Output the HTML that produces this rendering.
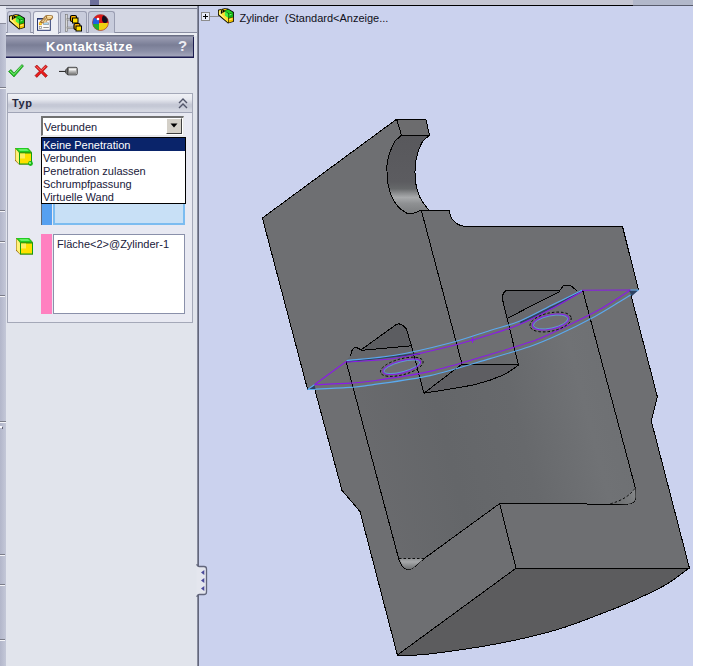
<!DOCTYPE html>
<html><head><meta charset="utf-8">
<style>
*{margin:0;padding:0;box-sizing:border-box}
html,body{width:701px;height:666px;overflow:hidden;background:#fff;font-family:"Liberation Sans",sans-serif;font-size:11px}
.a{position:absolute}
.t{position:absolute;white-space:nowrap;color:#20203a;font-size:11px;line-height:13px}
</style></head><body>
<!-- top strip -->
<div class="a" style="left:0;top:0;width:693px;height:5px;background:#c5c6d2"></div>
<div class="a" style="left:90px;top:0;width:9px;height:5px;background:#6c6e9a"></div>
<div class="a" style="left:633px;top:0;width:60px;height:5px;background:#b2b8ca"></div>
<div class="a" style="left:0;top:5px;width:693px;height:1px;background:#000"></div>
<div class="a" style="left:0;top:5px;width:90px;height:1px;background:#5c5e6c"></div>
<div class="a" style="left:633px;top:5px;width:60px;height:1px;background:#585c6c"></div>
<!-- left strip -->
<div class="a" style="left:0;top:6px;width:6px;height:660px;background:linear-gradient(90deg,#b2b6ca,#c4c8d8)"></div>
<div class="a" style="left:0;top:6px;width:6px;height:17px;background:#e4e6f0"></div>
<div class="a" style="left:0;top:23px;width:6px;height:1px;background:#8a8c9c"></div>
<div class="a" style="left:0;top:87px;width:6px;height:1px;background:#7a7c88"></div><div class="a" style="left:0;top:88px;width:6px;height:1px;background:#f4f4f8"></div>
<div class="a" style="left:0;top:210px;width:5px;height:1px;background:#7a7c88"></div><div class="a" style="left:0;top:211px;width:5px;height:1px;background:#f4f4f8"></div>
<div class="a" style="left:0;top:241px;width:5px;height:1px;background:#7a7c88"></div><div class="a" style="left:0;top:242px;width:5px;height:1px;background:#f4f4f8"></div>
<div class="a" style="left:0;top:295px;width:5px;height:1px;background:#7a7c88"></div><div class="a" style="left:0;top:296px;width:5px;height:1px;background:#f4f4f8"></div>
<div class="a" style="left:0;top:421px;width:6px;height:1px;background:#7a7c88"></div><div class="a" style="left:0;top:422px;width:6px;height:1px;background:#f4f4f8"></div>
<div class="a" style="left:0;top:554px;width:5px;height:1px;background:#7a7c88"></div><div class="a" style="left:0;top:555px;width:5px;height:1px;background:#f4f4f8"></div>
<div class="a" style="left:0;top:584px;width:5px;height:1px;background:#7a7c88"></div><div class="a" style="left:0;top:585px;width:5px;height:1px;background:#f4f4f8"></div>
<div class="a" style="left:0;top:639px;width:5px;height:1px;background:#7a7c88"></div><div class="a" style="left:0;top:640px;width:5px;height:1px;background:#f4f4f8"></div>
<div class="a" style="left:0;top:426px;width:2px;height:2px;background:#f8f8fc"></div><div class="a" style="left:2px;top:427px;width:1px;height:2px;background:#606070"></div>
<!-- panel -->
<div class="a" style="left:6px;top:6px;width:191px;height:660px;background:#e1e4ec"></div>
<div class="a" style="left:6px;top:6px;width:191px;height:27px;background:#d4d7e4"></div>
<div class="a" style="left:6px;top:8px;width:191px;height:1px;background:#7a7e92"></div>
<div class="a" style="left:6px;top:32px;width:191px;height:1px;background:#8a8ea2"></div>
<div class="a" style="left:6px;top:33px;width:191px;height:3px;background:#eceef4"></div>
<!-- tabs -->
<div class="a" style="left:7px;top:11px;width:24px;height:22px;background:#c8ccdc;border:1px solid #9a9eb2;border-bottom:none;border-radius:3px 3px 0 0"></div>
<div class="a" style="left:33px;top:11px;width:26px;height:23px;background:#eceef4;border:1px solid #9a9eb2;border-bottom:none;border-radius:3px 3px 0 0"></div>
<div class="a" style="left:60px;top:11px;width:27px;height:22px;background:#c8ccdc;border:1px solid #9a9eb2;border-bottom:none;border-radius:3px 3px 0 0"></div>
<div class="a" style="left:88px;top:11px;width:27px;height:22px;background:#c8ccdc;border:1px solid #9a9eb2;border-bottom:none;border-radius:3px 3px 0 0"></div>
<!-- header -->
<div class="a" style="left:6px;top:35px;width:188px;height:23px;background:linear-gradient(180deg,#6a6e84 0,#6a6e84 1px,#9c9eb4 2px,#7a7e96 10px,#8a8ea6 16px,#a2a4ba 21px,#1c1c50 22px,#1c1c50 23px)"></div>
<div class="t" style="left:46px;top:38px;font-size:13px;line-height:17px;color:#fff;font-weight:bold;letter-spacing:0.5px">Kontaktsätze</div>
<div class="a" style="left:193px;top:37px;width:1px;height:21px;background:#1c1c50"></div>
<div class="t" style="left:178px;top:37px;font-size:15px;line-height:17px;color:#ececf2;font-weight:bold">?</div>

<!-- tab icons -->
<svg class="a" style="left:8px;top:13px" width="20" height="19" viewBox="8 13 20 19">
 <path d="M9 15.8 L13.5 14.8 L15.5 14.2 L19 14.6 L24.9 18 L24.9 27.8 L19 29.6 L9 21.2 Z" fill="#000"/>
 <path d="M9.8 16.4 L13 15.6 L14.2 16.4 L13 19.3 L16 17.5 L19.2 20.5 L19 28.6 L9.8 20.6 Z" fill="#ffe030"/>
 <path d="M10.4 17.2 L11.6 17 L12.2 20 L17.5 26.3 L10.4 20.3 Z" fill="#fff8a0"/>
 <path d="M11.9 16.3 L13.7 16 L12.9 19.6 L11.8 19.9 Z" fill="#000"/>
 <path d="M13.8 15.2 L15.6 14.9 L18.5 15.3 L15.8 16.5 Z" fill="#f8c800"/>
 <path d="M15.8 16.8 L19.3 15.5 L24.1 18.6 L20.3 20 Z" fill="#22d022"/>
 <path d="M15.8 17 L19.3 19.8 L19.3 24 L15.8 21.6 Z" fill="#44ee44"/>
 <path d="M19.6 20 L24.1 18.8 L24.1 23 L19.6 24.3 Z" fill="#12b412"/>
 <path d="M20.5 21 L22.5 20.3" stroke="#a0ffa0" stroke-width="0.9"/>
 <path d="M19.6 24.6 L24.1 23.3 L24.1 27.3 L19.6 28.8 Z" fill="#f2c000"/>
 <path d="M20.2 25.3 L23.4 24.3 L23.4 25.3 L20.2 26.3 Z" fill="#ffec90"/>
</svg>
<svg class="a" style="left:36px;top:14px" width="20" height="18" viewBox="36 14 20 18">
 <rect x="37" y="18" width="13.8" height="12.8" fill="#2a3870"/>
 <rect x="38" y="19.2" width="11.8" height="10.6" fill="#fafafa"/>
 <rect x="38" y="19" width="11.8" height="1" fill="#8090b8"/>
 <rect x="38.9" y="22.3" width="2.8" height="2.8" fill="#e8a000"/>
 <rect x="39.6" y="23" width="1.4" height="1.4" fill="#ffe040"/>
 <rect x="43.3" y="22.5" width="5.5" height="2.4" fill="#8a8a8a"/>
 <rect x="43.8" y="23" width="4.5" height="1.4" fill="#a8d8f0"/>
 <rect x="38.9" y="26" width="2.8" height="2.8" fill="#8a8a8a"/>
 <rect x="39.6" y="26.7" width="1.4" height="1.4" fill="#fff"/>
 <rect x="43.3" y="27" width="5.5" height="0.9" fill="#8a8a8a"/>
 <path d="M39.5 22 L45.5 15.5 L47.5 15 L52.5 15.5 L53.2 17.5 L51.5 19.8 L48 20.5 L45.5 21 L43 23.5 Z" fill="#8a5a18"/>
 <path d="M40.5 21.5 L45.5 16.3 L47.8 21 L44 23 Z" fill="#e8c890"/>
 <path d="M41 21 L42 21 M43 19 L44 19 M42 20 L43 20 M44 18 L45 18 M44 20 L45 20 M43 22 L44 22 M45 19 L46 19 M46 21 L47 21" stroke="#7a4a10" stroke-width="0.7"/>
 <path d="M46.5 15.8 L52 16 L52.5 17.5 L50.5 19 L47.5 19.5 Z" fill="#f0d090"/>
 <path d="M47.5 16.3 L51 16.5" stroke="#fff0c0" stroke-width="0.8"/>
</svg>
<svg class="a" style="left:63px;top:14px" width="20" height="18" viewBox="0 0 20 18">
 <rect x="2.5" y="0.5" width="2" height="17" fill="#d8d8d8" stroke="#707070" stroke-width="0.6"/>
 <rect x="4" y="4.5" width="6" height="1.6" fill="#c8c8c8" stroke="#707070" stroke-width="0.5"/>
 <rect x="4" y="13" width="9" height="1.6" fill="#c8c8c8" stroke="#707070" stroke-width="0.5"/>
 <rect x="7.5" y="1.5" width="6" height="6" rx="1.5" fill="#ffb400" stroke="#000" stroke-width="1.2"/>
 <rect x="9.5" y="4" width="5.5" height="5" fill="#ffe000" stroke="#000" stroke-width="1"/>
 <rect x="11" y="9.5" width="6" height="6" rx="1.5" fill="#ffb400" stroke="#000" stroke-width="1.2"/>
 <rect x="13" y="12" width="5.5" height="5" fill="#ffe000" stroke="#000" stroke-width="1"/>
</svg>
<svg class="a" style="left:91px;top:13px" width="19" height="19" viewBox="0 0 19 19">
 <defs><clipPath id="cp"><circle cx="9.5" cy="9.5" r="8"/></clipPath></defs>
 <g clip-path="url(#cp)">
  <rect x="0" y="0" width="19" height="19" fill="#e01818"/>
  <rect x="0" y="10" width="19" height="9" fill="#f0d010"/>
  <path d="M0 3 L8 7 L8 12 L0 14 Z" fill="#2060e0"/>
  <path d="M0 11 L8 11 L8 19 L0 19 Z" fill="#20b030"/>
  <ellipse cx="14" cy="6" rx="3" ry="4" fill="#101020"/>
  <circle cx="7" cy="6" r="1.3" fill="#fff"/>
 </g>
 <circle cx="9.5" cy="9.5" r="8" fill="none" stroke="#a04040" stroke-width="0.6"/>
</svg>
<!-- check / x / pin -->
<svg class="a" style="left:7px;top:63px" width="18" height="16" viewBox="0 0 18 16">
 <path d="M1.5 8.5 L4 6.5 L7 10 L15 1.5 L16.5 3 L7 14 Z" fill="#22c022" stroke="#108010" stroke-width="0.6"/>
 <path d="M3 8 L7 11.5 L15 2.5" stroke="#9cf49c" stroke-width="0.8" fill="none"/>
</svg>
<svg class="a" style="left:34px;top:64px" width="15" height="15" viewBox="0 0 15 15">
 <path d="M1 2.8 L2.8 1 L7.2 5.4 L11.6 1 L13.4 2.8 L9 7.2 L13.4 11.6 L11.6 13.4 L7.2 9 L2.8 13.4 L1 11.6 L5.4 7.2 Z" fill="#e81c1c" stroke="#900000" stroke-width="0.6"/>
 <path d="M2.5 2.5 L7.2 7 M11.5 2.5 L7.5 6.5" stroke="#ff9090" stroke-width="0.6"/>
</svg>
<svg class="a" style="left:58px;top:65px" width="21" height="13" viewBox="58 65 21 13">
 <rect x="59" y="70.9" width="7" height="1.1" fill="#303030"/>
 <path d="M65.5 69.8 L68 67.6 L68 75 L65.5 73 Z" fill="#707070" stroke="#303030" stroke-width="0.6"/>
 <path d="M68 67.3 L76 67.3 Q77.3 67.3 77.3 68.6 L77.3 73.6 Q77.3 74.9 76 74.9 L68 74.9 Z" fill="#b8b8b8" stroke="#303030" stroke-width="0.8"/>
 <rect x="69" y="68.5" width="7" height="2" fill="#f2f2f2"/>
 <rect x="69" y="72.5" width="7" height="1.5" fill="#8a8a8a"/>
</svg>
<!-- group box -->
<div class="a" style="left:7px;top:93px;width:186px;height:230px;border:1px solid #a4a8b8;background:#e8e9f2"></div>
<div class="a" style="left:8px;top:94px;width:184px;height:19px;background:linear-gradient(180deg,#f0f1f6 0%,#e6e8ef 30%,#c6c9d6 58%,#c4c8d5 68%,#d2d5e0 88%,#d6d8e2 100%);border-bottom:1px solid #a0a4b6"></div>
<div class="t" style="left:12px;top:96px;font-weight:bold;color:#26283e;font-size:11px;line-height:14px;letter-spacing:0.6px">Typ</div>
<svg class="a" style="left:178px;top:98px" width="10" height="11" viewBox="0 0 10 11">
 <path d="M1 5 L5 1 L9 5 M1 10 L5 6 L9 10" stroke="#505468" stroke-width="1.4" fill="none"/>
</svg>
<!-- dropdown -->
<div class="a" style="left:41px;top:116px;width:143px;height:20px;background:#fff;border-top:2px solid #707070;border-left:2px solid #707070;border-right:1px solid #e8e8e8;border-bottom:1px solid #e8e8e8"></div>
<div class="a" style="left:166px;top:118px;width:16px;height:16px;background:#d4d0c8;border-top:1px solid #fff;border-left:1px solid #fff;border-right:1px solid #404040;border-bottom:1px solid #404040"></div>
<svg class="a" style="left:170px;top:123px" width="8" height="5" viewBox="0 0 8 5"><path d="M0.5 0.5 L7.5 0.5 L4 4.5 Z" fill="#000"/></svg>
<div class="t" style="left:44px;top:121px">Verbunden</div>
<!-- blue selection box -->
<div class="a" style="left:41px;top:203px;width:11px;height:22px;background:#56a0f0;border-left:1px solid #606878"></div>
<div class="a" style="left:53px;top:204px;width:132px;height:21px;background:#c8e0f6;border:2px solid #7cbcf0;border-top:none"></div>
<!-- list -->
<div class="a" style="left:41px;top:137px;width:145px;height:67px;background:#fff;border:1px solid #000"></div>
<div class="a" style="left:42px;top:138px;width:143px;height:13px;background:#0a246a"></div>
<div class="t" style="left:43px;top:139px;color:#fff">Keine Penetration</div>
<div class="t" style="left:43px;top:152px">Verbunden</div>
<div class="t" style="left:43px;top:165px">Penetration zulassen</div>
<div class="t" style="left:43px;top:178px">Schrumpfpassung</div>
<div class="t" style="left:43px;top:191px">Virtuelle Wand</div>
<!-- pink box -->
<div class="a" style="left:41px;top:234px;width:11px;height:80px;background:#ff80c0"></div>
<div class="a" style="left:53px;top:234px;width:132px;height:80px;background:#fff;border:1px solid #8a90aa"></div>
<div class="t" style="left:57px;top:238px">Fläche&lt;2&gt;@Zylinder-1</div>
<!-- cube icons -->
<svg class="a" style="left:14px;top:147px" width="21" height="21" viewBox="0 0 21 21">
 <path d="M1 1 L14 1 L18 5.5 L18 17.5 L5 17.5 L1 13.5 Z" fill="#906000"/>
 <path d="M1.5 1.5 L5 5.5 L5 17 L1.5 13 Z" fill="#fff27a"/>
 <path d="M1 1 L14 1 L18 5.5 L5 5.5 Z" fill="#22cc22"/>
 <path d="M4 2 L13 2 L15 4 L6 4 Z" fill="#66ee66"/>
 <rect x="5" y="5.5" width="13" height="12" fill="#10a010"/>
 <rect x="6" y="6.5" width="11" height="10" fill="#ffe000"/>
 <rect x="6" y="6.5" width="5" height="5" fill="#fff060"/>
 <circle cx="16.5" cy="16.5" r="2.4" fill="#18b818"/>
 <circle cx="16" cy="16" r="0.9" fill="#b0ffb0"/>
</svg>
<svg class="a" style="left:15px;top:237px" width="21" height="21" viewBox="0 0 21 21">
 <path d="M1 1 L14 1 L18 5.5 L18 17.5 L5 17.5 L1 13.5 Z" fill="#906000"/>
 <path d="M1.5 1.5 L5 5.5 L5 17 L1.5 13 Z" fill="#fff27a"/>
 <path d="M1 1 L14 1 L18 5.5 L5 5.5 Z" fill="#22cc22"/>
 <path d="M4 2 L13 2 L15 4 L6 4 Z" fill="#66ee66"/>
 <rect x="5" y="5.5" width="13" height="12" fill="#10a010"/>
 <rect x="6" y="6.5" width="11" height="10" fill="#ffe000"/>
 <rect x="6" y="6.5" width="5" height="5" fill="#fff060"/>
</svg>
<!-- divider handle -->
<!-- divider -->
<div class="a" style="left:197px;top:6px;width:2px;height:660px;background:linear-gradient(90deg,#9a9eb0,#50546a)"></div>
<!-- viewport -->
<div class="a" style="left:199px;top:6px;width:494px;height:660px;background:#cbd2ee"></div>
<!-- tree item -->
<div class="a" style="left:201px;top:12px;width:9px;height:9px;border:1px solid #8c8c8c;background:#e8ecf8"></div>
<div class="a" style="left:203px;top:16px;width:5px;height:1px;background:#000"></div>
<div class="a" style="left:205px;top:14px;width:1px;height:5px;background:#000"></div>
<div class="a" style="left:210px;top:16px;width:9px;height:1px;background:#909090"></div>
<svg class="a" style="left:218px;top:7px" width="20" height="19" viewBox="9 13 20 19">
 <path d="M9 15.8 L13.5 14.8 L15.5 14.2 L19 14.6 L24.9 18 L24.9 27.8 L19 29.6 L9 21.2 Z" fill="#000"/>
 <path d="M9.8 16.4 L13 15.6 L14.2 16.4 L13 19.3 L16 17.5 L19.2 20.5 L19 28.6 L9.8 20.6 Z" fill="#ffe030"/>
 <path d="M10.4 17.2 L11.6 17 L12.2 20 L17.5 26.3 L10.4 20.3 Z" fill="#fff8a0"/>
 <path d="M11.9 16.3 L13.7 16 L12.9 19.6 L11.8 19.9 Z" fill="#000"/>
 <path d="M13.8 15.2 L15.6 14.9 L18.5 15.3 L15.8 16.5 Z" fill="#f8c800"/>
 <path d="M15.8 16.8 L19.3 15.5 L24.1 18.6 L20.3 20 Z" fill="#22d022"/>
 <path d="M15.8 17 L19.3 19.8 L19.3 24 L15.8 21.6 Z" fill="#44ee44"/>
 <path d="M19.6 20 L24.1 18.8 L24.1 23 L19.6 24.3 Z" fill="#12b412"/>
 <path d="M20.5 21 L22.5 20.3" stroke="#a0ffa0" stroke-width="0.9"/>
 <path d="M19.6 24.6 L24.1 23.3 L24.1 27.3 L19.6 28.8 Z" fill="#f2c000"/>
 <path d="M20.2 25.3 L23.4 24.3 L23.4 25.3 L20.2 26.3 Z" fill="#ffec90"/>
</svg>
<div class="t" style="left:239.5px;top:12px;color:#101020">Zylinder&nbsp; (Standard&lt;Anzeige...</div>
<svg class="a" style="left:0;top:0" width="701" height="666" viewBox="0 0 701 666">
<defs>
<linearGradient id="cyl" x1="0" y1="135" x2="0" y2="213" gradientUnits="userSpaceOnUse"><stop offset="0" stop-color="#58585c"/><stop offset="0.6" stop-color="#5c5c60"/><stop offset="0.69" stop-color="#66686a"/><stop offset="0.745" stop-color="#8a8c8e"/><stop offset="0.8" stop-color="#a8aaac"/><stop offset="0.88" stop-color="#8e9092"/><stop offset="1" stop-color="#7c7e80"/></linearGradient>
<linearGradient id="pock" x1="350" y1="430" x2="640" y2="355" gradientUnits="userSpaceOnUse"><stop offset="0" stop-color="#6a6b6e"/><stop offset="0.3" stop-color="#646669"/><stop offset="0.55" stop-color="#67696c"/><stop offset="0.78" stop-color="#707275"/><stop offset="0.9" stop-color="#6e7073"/><stop offset="1" stop-color="#6a6c6f"/></linearGradient>
<linearGradient id="hl1" x1="0" y1="558" x2="0" y2="569" gradientUnits="userSpaceOnUse"><stop offset="0" stop-color="#8a8c8e"/><stop offset="0.35" stop-color="#a6a8aa"/><stop offset="1" stop-color="#707274"/></linearGradient>
<linearGradient id="hl2" x1="612" y1="504" x2="636" y2="490" gradientUnits="userSpaceOnUse"><stop offset="0" stop-color="#6a6c6e"/><stop offset="0.7" stop-color="#7a7c7e"/><stop offset="1" stop-color="#8a8c8e"/></linearGradient>
</defs>
<path d="M262.4 218.0 L396.6 119.2 L425.9 119.2 L429.5 135.3 C428.4 136.3 424.4 139.3 422.8 141.3 C421.2 143.3 420.7 145.2 419.8 147.3 C418.9 149.4 418.2 151.6 417.5 154.0 C416.8 156.4 416.1 158.7 415.7 161.5 C415.3 164.3 415.0 167.6 415.0 171.0 C415.0 174.4 414.9 178.0 415.5 182.0 C416.1 186.0 417.5 191.3 418.8 194.8 C420.1 198.3 421.6 200.4 423.3 203.0 C425.0 205.6 428.2 209.1 429.2 210.3 L449.5 210.5 A17 16 0 0 0 466.5 226.4 L622.5 226.4 L638.4 290.0 L630.8 294.4 L657.3 396.6 L651.3 421.0 L689.4 568.0 C685.2 570.9 674.4 579.8 664.2 585.6 C654.1 591.4 639.2 598.0 628.5 602.8 C617.8 607.6 611.4 609.9 600.0 614.2 C588.6 618.5 574.7 624.3 559.9 628.8 C545.1 633.3 527.6 637.5 511.4 641.0 C495.2 644.5 478.0 647.2 462.8 649.5 C447.6 651.8 431.2 653.9 420.3 654.8 C409.4 655.7 401.2 655.0 397.4 655.0 L360.0 511.5 L342.0 490.4 L314.8 389.5 L307.6 389.5 Z" fill="#6e6f72"/>
<path d="M346.0 361.0 L398.6 558.5 C401 566 404 569.2 407 569.2 L410.7 569.2 Q412 569 413 568 L424.2 558.5 L499.6 503.6 L626.7 504.2 Q635.6 504 635.6 497.1 L635.3 487.8 L582.7 290.3 L595.0 316.4 C588.8 319.5 568.6 330.0 557.8 335.0 C547.0 340.0 541.3 342.5 530.0 346.4 C518.7 350.3 506.7 353.7 490.0 358.6 C473.3 363.5 450.0 371.2 430.0 375.6 C410.0 380.0 383.3 383.1 370.0 385.1 C356.7 387.1 353.3 387.0 350.0 387.4 Z" fill="url(#pock)"/>
<path d="M516.0 568.2 L689.4 568.0 C685.2 570.9 674.4 579.8 664.2 585.6 C654.1 591.4 639.2 598.0 628.5 602.8 C617.8 607.6 611.4 609.9 600.0 614.2 C588.6 618.5 574.7 624.3 559.9 628.8 C545.1 633.3 527.6 637.5 511.4 641.0 C495.2 644.5 478.0 647.2 462.8 649.5 C447.6 651.8 431.2 653.9 420.3 654.8 C409.4 655.7 401.2 655.0 397.4 655.0 Z" fill="#5c5c5e"/>
<path d="M462.0 364.1 L518.5 365.0 C515.9 366.7 510.1 371.9 502.8 375.2 C495.6 378.4 488.1 381.5 475.0 384.5 C461.9 387.5 432.4 391.8 423.9 393.2 Z" fill="#5e5e62"/>
<path d="M401.5 135.3 L429.5 135.3 C428.4 136.3 424.4 139.3 422.8 141.3 C421.2 143.3 420.7 145.2 419.8 147.3 C418.9 149.4 418.2 151.6 417.5 154.0 C416.8 156.4 416.1 158.7 415.7 161.5 C415.3 164.3 415.0 167.6 415.0 171.0 C415.0 174.4 414.9 178.0 415.5 182.0 C416.1 186.0 417.5 191.3 418.8 194.8 C420.1 198.3 421.6 200.4 423.3 203.0 C425.0 205.6 428.2 209.1 429.2 210.3 L420.7 210.5 C419.6 210.9 416.8 212.3 415.0 212.8 C413.2 213.3 411.4 213.5 409.8 213.4 C408.2 213.3 407.4 213.8 405.3 212.4 C403.2 211.1 399.4 208.2 397.0 205.3 C394.6 202.4 392.6 198.9 391.0 194.8 C389.4 190.8 388.2 184.9 387.5 181.0 C386.8 177.1 387.1 174.2 387.0 171.3 C386.9 168.4 386.8 166.3 387.1 163.8 C387.4 161.3 387.9 158.8 388.6 156.3 C389.3 153.8 390.2 151.3 391.3 148.8 C392.4 146.3 393.3 143.6 395.0 141.3 C396.7 139.1 400.4 136.3 401.5 135.3 Z" fill="url(#cyl)"/>
<path d="M396.6 119.2 L425.9 119.2 L429.5 135.3 L401.5 135.3 Z" fill="#6c6c6e"/>
<path d="M350.3 356.0 L352.0 350.4 Q354 347 356.6 347.5 L361.1 349.8 L396.0 324.7 Q401 322 406.2 328.7 L410.2 341.3 L413.0 352.6 L346.3 360.1 Z" fill="#65666a"/>
<path d="M361.1 349.8 L396.0 324.7 Q401 322 406.2 328.7 L410.2 341.3 L411.3 345.8 Z" fill="#5c5d61"/>
<path d="M502.8 300.7 L502.8 295.0 Q504 290 509.3 290 L560.0 290.0 L563.5 285.7 L570.6 285.7 L577.0 290.5 L582.0 290.3 C577.3 292.6 564.3 298.9 554.0 304.0 C543.7 309.1 528.0 317.4 520.0 321.0 C512.0 324.6 508.3 324.8 506.0 325.5 Z" fill="#68696d"/>
<path d="M502.8 300.7 L502.8 295.0 Q504 290 509.3 290 L560.0 290.0 L560.0 291.4 C555.8 293.5 543.8 299.5 535.0 304.0 C526.2 308.5 511.8 316.1 507.1 318.5 Z" fill="#5e5f63"/>
<path d="M262.4 218.0 L396.6 119.2 L425.9 119.2 L429.5 135.3 C428.4 136.3 424.4 139.3 422.8 141.3 C421.2 143.3 420.7 145.2 419.8 147.3 C418.9 149.4 418.2 151.6 417.5 154.0 C416.8 156.4 416.1 158.7 415.7 161.5 C415.3 164.3 415.0 167.6 415.0 171.0 C415.0 174.4 414.9 178.0 415.5 182.0 C416.1 186.0 417.5 191.3 418.8 194.8 C420.1 198.3 421.6 200.4 423.3 203.0 C425.0 205.6 428.2 209.1 429.2 210.3 L449.5 210.5 A17 16 0 0 0 466.5 226.4 L622.5 226.4 L638.4 290.0" stroke="#000" stroke-width="1" fill="none" shape-rendering="crispEdges"/>
<path d="M630.8 294.4 L657.3 396.6 L651.3 421.0 L689.4 568.0 C685.2 570.9 674.4 579.8 664.2 585.6 C654.1 591.4 639.2 598.0 628.5 602.8 C617.8 607.6 611.4 609.9 600.0 614.2 C588.6 618.5 574.7 624.3 559.9 628.8 C545.1 633.3 527.6 637.5 511.4 641.0 C495.2 644.5 478.0 647.2 462.8 649.5 C447.6 651.8 431.2 653.9 420.3 654.8 C409.4 655.7 401.2 655.0 397.4 655.0 L360.0 511.5 L342.0 490.4 L314.8 389.5" stroke="#000" stroke-width="1" fill="none" shape-rendering="crispEdges"/>
<path d="M262.4 218.0 L307.6 389.5" stroke="#000" stroke-width="1" fill="none" shape-rendering="crispEdges"/>
<path d="M396.6 119.2 L401.5 135.3 L429.5 135.3" stroke="#000" stroke-width="1" fill="none" shape-rendering="crispEdges"/>
<path d="M401.5 135.3 C400.4 136.3 396.7 139.1 395.0 141.3 C393.3 143.6 392.4 146.3 391.3 148.8 C390.2 151.3 389.3 153.8 388.6 156.3 C387.9 158.8 387.4 161.3 387.1 163.8 C386.8 166.3 386.9 168.4 387.0 171.3 C387.1 174.2 386.8 177.1 387.5 181.0 C388.2 184.9 389.4 190.8 391.0 194.8 C392.6 198.9 394.6 202.4 397.0 205.3 C399.4 208.2 403.2 211.1 405.3 212.4 C407.4 213.8 408.2 213.3 409.8 213.4 C411.4 213.5 413.2 213.3 415.0 212.8 C416.8 212.3 419.6 210.9 420.5 210.5 L429.5 210.5" stroke="#000" stroke-width="1" fill="none" shape-rendering="crispEdges"/>
<path d="M421.5 211.0 L462.0 364.1 L518.5 365.0" stroke="#000" stroke-width="1" fill="none" shape-rendering="crispEdges"/>
<path d="M462.0 364.1 L423.9 393.2 C432.4 391.8 461.9 387.5 475.0 384.5 C488.1 381.5 495.6 378.4 502.8 375.2 C510.1 371.9 515.9 366.7 518.5 365.0" stroke="#000" stroke-width="1" fill="none" shape-rendering="crispEdges"/>
<path d="M502.8 300.7 L502.8 295.0 Q504 290 509.3 290 L560.0 290.0 L563.5 285.7 L570.6 285.7 L577.0 290.5" stroke="#000" stroke-width="1" fill="none" shape-rendering="crispEdges"/>
<path d="M502.8 300.7 L518.5 365.0" stroke="#000" stroke-width="1" fill="none" shape-rendering="crispEdges"/>
<path d="M507.1 318.5 C511.8 316.1 526.2 308.5 535.0 304.0 C543.8 299.5 555.8 293.5 560.0 291.4" stroke="#000" stroke-width="1" fill="none" shape-rendering="crispEdges"/>
<path d="M350.3 356.0 L352.0 350.4 Q354 347 356.6 347.5 L361.1 349.8 L396.0 324.7 Q401 322 406.2 328.7 L410.2 341.3 L423.9 393.2" stroke="#000" stroke-width="1" fill="none" shape-rendering="crispEdges"/>
<path d="M361.1 350.4 L411.3 345.8" stroke="#000" stroke-width="1" fill="none" shape-rendering="crispEdges"/>
<path d="M346.0 361.0 L398.6 558.5 C401 566 404 569.2 407 569.2 L410.7 569.2 Q412 569 413 568 L424.2 558.5 L499.6 503.6 L626.7 504.2 Q635.6 504 635.6 497.1 L635.3 487.8 L582.7 290.3" stroke="#000" stroke-width="1" fill="none" shape-rendering="crispEdges"/>
<path d="M499.6 503.6 L516.0 568.2 L689.4 568.0" stroke="#000" stroke-width="1" fill="none" shape-rendering="crispEdges"/>
<path d="M516.0 568.2 L397.4 655.0" stroke="#000" stroke-width="1" fill="none" shape-rendering="crispEdges"/>
<path d="M399.5 558.5 L424 558.5 L413 568 L410.7 569.2 L407 569.2 Q402 567 399.5 558.5 Z" fill="url(#hl1)"/>
<path d="M610.3 503.8 Q628 499 635.3 487.8 L635.6 497.1 Q635.6 504 626.7 504.2 Z" fill="url(#hl2)"/>
<path d="M399 558.5 L424 558.5" stroke="#000" stroke-width="0.9" stroke-dasharray="2.5 2" fill="none"/>
<path d="M610.3 503.8 Q628 499 635.3 487.8" stroke="#000" stroke-width="0.9" stroke-dasharray="2.5 2" fill="none"/>
<path d="M347 361.6 L420 353.6" stroke="#2c4262" stroke-width="1.6" fill="none"/>
<path d="M520 322.8 C535 316 548 309 556 305.4 C566 300 574 295 581 291.3" stroke="#2c4262" stroke-width="2" fill="none"/>
<path d="M346.5 362.0 C354.6 361.4 377.8 360.9 395.0 358.3 C412.2 355.7 433.3 350.5 450.0 346.3 C466.7 342.1 483.3 336.7 495.0 333.0 C506.7 329.3 510.2 328.6 520.0 324.3 C529.8 320.1 543.7 313.0 554.0 307.5 C564.3 302.0 577.3 294.2 582.0 291.5" stroke="#8a1ae8" stroke-width="1.1" fill="none"/>
<path d="M346.5 360.5 C354.6 359.6 377.8 358.2 395.0 355.3 C412.2 352.4 434.2 347.1 450.0 343.0 C465.8 338.9 478.3 334.2 490.0 330.5 C501.7 326.8 509.3 325.4 520.0 321.0 C530.7 316.6 543.7 309.1 554.0 304.0 C564.3 298.9 577.3 292.6 582.0 290.3" stroke="#5aaaf0" stroke-width="1.1" fill="none"/>
<path d="M314.4 384.8 C320.3 384.5 340.7 383.7 350.0 383.1 C359.3 382.5 356.7 383.2 370.0 381.3 C383.3 379.4 410.0 375.9 430.0 371.4 C450.0 366.9 473.3 359.4 490.0 354.5 C506.7 349.6 520.4 345.4 530.0 342.1 C539.6 338.9 537.0 340.0 547.8 335.0 C558.6 330.0 583.8 317.8 595.0 312.0 C606.2 306.2 609.1 303.7 615.0 300.0 C620.9 296.3 627.8 291.7 630.4 290.0" stroke="#8a1ae8" stroke-width="1.1" fill="none"/>
<path d="M307.6 389.5 C314.7 389.1 339.6 388.1 350.0 387.4 C360.4 386.7 356.7 387.1 370.0 385.1 C383.3 383.1 410.0 380.0 430.0 375.6 C450.0 371.2 473.3 363.5 490.0 358.6 C506.7 353.7 518.7 350.3 530.0 346.4 C541.3 342.5 547.0 340.0 557.8 335.0 C568.6 330.0 584.6 322.0 595.0 316.4 C605.4 310.8 612.8 305.9 620.0 301.5 C627.2 297.1 635.3 291.9 638.4 290.0" stroke="#5aaaf0" stroke-width="1.1" fill="none"/>
<path d="M629 290.6 L638 290.6 L632 296 Z M308.5 389 L314.5 385 L315.5 389 Z" fill="#2c4262"/>
<path d="M314.4 384.8 L346.5 361.3" stroke="#8a1ae8" stroke-width="1.1" fill="none"/>
<path d="M582 290.3 L630.4 290" stroke="#8a1ae8" stroke-width="1.1" fill="none"/>
<path d="M307.6 389.5 L314.4 384.8 M630.4 290 L638.4 290" stroke="#5aaaf0" stroke-width="1.1" fill="none"/>
<ellipse cx="401.8" cy="366.8" rx="22.0" ry="8" transform="rotate(-15 401.8 366.8)" fill="none" stroke="#000" stroke-width="0.9" stroke-dasharray="2.5 2"/>
<ellipse cx="401.8" cy="366.8" rx="19.5" ry="6" transform="rotate(-15 401.8 366.8)" fill="none" stroke="#8a1ae8" stroke-width="1.1"/>
<ellipse cx="401.8" cy="366.8" rx="18.5" ry="5" transform="rotate(-15 401.8 366.8)" fill="none" stroke="#5aaaf0" stroke-width="0.7"/>
<ellipse cx="550.6" cy="322" rx="21.0" ry="9.1" transform="rotate(-12 550.6 322)" fill="none" stroke="#000" stroke-width="0.9" stroke-dasharray="2.5 2"/>
<ellipse cx="550.6" cy="322" rx="18.5" ry="7.1" transform="rotate(-12 550.6 322)" fill="none" stroke="#8a1ae8" stroke-width="1.1"/>
<ellipse cx="550.6" cy="322" rx="17.5" ry="6.1" transform="rotate(-12 550.6 322)" fill="none" stroke="#5aaaf0" stroke-width="0.7"/>
<path d="M472.5 337 L472.5 343 M470 340 L475 340" stroke="#8a1ae8" stroke-width="1"/>
</svg>
<!-- handle -->
<svg class="a" style="left:196px;top:564px" width="12" height="33" viewBox="0 0 12 33">
 <rect x="0" y="2" width="3" height="29" fill="#e2e5ed"/>
 <path d="M1 0 Q1 2.5 3.5 2.5 L8 2.5 Q10.5 2.5 10.5 5 L10.5 28 Q10.5 30.5 8 30.5 L3.5 30.5 Q1 30.5 1 33" fill="#e4e6ee" stroke="#62667c" stroke-width="1.3"/>
 <path d="M8.3 6 L5 8.5 L8.3 11 Z M8.3 14 L5 16.5 L8.3 19 Z M8.3 22 L5 24.5 L8.3 27 Z" fill="#4a4a9a"/>
</svg>
</body></html>
